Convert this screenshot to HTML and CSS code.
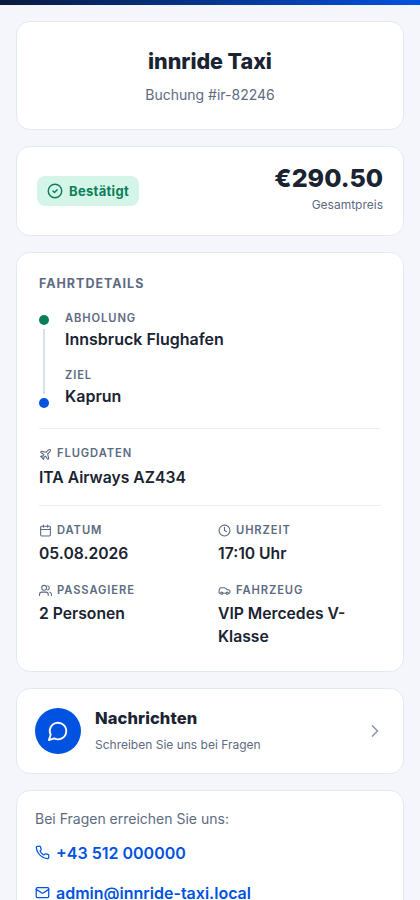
FILE: index.html
```html
<!DOCTYPE html>
<html lang="de">
<head>
<meta charset="utf-8">
<meta name="viewport" content="width=device-width, initial-scale=1">
<title>innride Taxi</title>
<link rel="stylesheet" href="styles.css">
</head>
<body>
<div class="topbar"></div>
<main class="page">
  <header class="card brand">
    <h1>innride Taxi</h1>
    <p>Buchung #ir-82246</p>
  </header>

  <section class="card status">
    <span class="badge">
      <svg class="icon" width="18" height="18" viewBox="0 0 24 24"><circle cx="12" cy="12" r="9"/><path d="m9.300 12 2 2 3.600-3.600"/></svg>
      <span>Bestätigt</span>
    </span>
    <div class="price">
      <strong>€290.50</strong>
      <span>Gesamtpreis</span>
    </div>
  </section>

  <section class="card details">
    <h2>Fahrtdetails</h2>
    <div class="route">
      <div class="track"><i class="dot start"></i><i class="line"></i><i class="dot end"></i></div>
      <div class="stops">
        <div><div class="label">Abholung</div><div class="value">Innsbruck Flughafen</div></div>
        <div><div class="label">Ziel</div><div class="value">Kaprun</div></div>
      </div>
    </div>
    <div class="flight">
      <div class="label"><svg class="icon" width="13" height="13" viewBox="0 0 24 24"><path d="M17.8 19.2 16 11l3.500-3.500C21 6 21.500 4 21 3c-1-.5-3 0-4.500 1.500L13 8 4.800 6.200c-.5-.1-.9.1-1.100.5l-.3.500c-.2.5-.1 1 .3 1.300L9 12l-2 3H4l-1 1 3 2 2 3 1-1v-3l3-2 3.500 5.300c.3.4.8.5 1.300.2l.5-.2c.4-.3.6-.7.5-1.200z"/></svg>Flugdaten</div>
      <div class="value">ITA Airways AZ434</div>
    </div>
    <div class="grid">
      <div>
        <div class="label"><svg class="icon" width="13" height="13" viewBox="0 0 24 24"><path d="M8 2v4M16 2v4M3 10h18"/><rect x="3" y="4" width="18" height="18" rx="2"/></svg>Datum</div>
        <div class="value">05.08.2026</div>
      </div>
      <div>
        <div class="label"><svg class="icon" width="13" height="13" viewBox="0 0 24 24"><circle cx="12" cy="12" r="10"/><path d="M12 6v6l4 2"/></svg>Uhrzeit</div>
        <div class="value">17:10 Uhr</div>
      </div>
      <div>
        <div class="label"><svg class="icon" width="13" height="13" viewBox="0 0 24 24"><path d="M17 21v-2a4 4 0 0 0-4-4H5a4 4 0 0 0-4 4v2"/><circle cx="9.500" cy="7" r="4.500"/><path d="M23 21v-2a4 4 0 0 0-3-3.870M16 3.130a4 4 0 0 1 0 7.750"/></svg>Passagiere</div>
        <div class="value">2 Personen</div>
      </div>
      <div>
        <div class="label"><svg class="icon" width="13" height="13" viewBox="0 0 24 24"><path d="M19 17h2c.6 0 1-.4 1-1v-3c0-.9-.7-1.700-1.500-1.900C18.700 10.600 16 10 16 10s-1.300-1.400-2.200-2.300c-.5-.4-1.100-.7-1.800-.7H5c-.6 0-1.100.4-1.400.9l-1.400 2.900A3.700 3.700 0 0 0 2 12v4c0 .6.4 1 1 1h2"/><circle cx="7" cy="17" r="2"/><path d="M9 17h6"/><circle cx="17" cy="17" r="2"/></svg>Fahrzeug</div>
        <div class="value">VIP Mercedes V-Klasse</div>
      </div>
    </div>
  </section>

  <a class="card messages">
    <span class="bubble"><svg class="icon" width="22" height="22" viewBox="0 0 24 24"><path d="M7.900 20A9 9 0 1 0 4 16.100L2 22Z"/></svg></span>
    <span class="messages-text">
      <strong>Nachrichten</strong>
      <span>Schreiben Sie uns bei Fragen</span>
    </span>
    <svg class="icon chevron" width="20" height="20" viewBox="0 0 24 24"><path d="m9 18 6-6-6-6"/></svg>
  </a>

  <section class="card contact">
    <p>Bei Fragen erreichen Sie uns:</p>
    <a><svg class="icon" width="15" height="15" viewBox="0 0 24 24"><path d="M22 16.920v3a2 2 0 0 1-2.180 2 19.790 19.790 0 0 1-8.630-3.070 19.500 19.500 0 0 1-6-6 19.790 19.790 0 0 1-3.070-8.670A2 2 0 0 1 4.110 2h3a2 2 0 0 1 2 1.720 12.840 12.840 0 0 0 .7 2.810 2 2 0 0 1-.45 2.110L8.090 9.910a16 16 0 0 0 6 6l1.270-1.270a2 2 0 0 1 2.110-.45 12.840 12.840 0 0 0 2.810.7A2 2 0 0 1 22 16.920z"/></svg><span>+43 512 000000</span></a>
    <a><svg class="icon" width="15" height="15" viewBox="0 0 24 24"><rect x="2" y="4" width="20" height="16" rx="2"/><path d="m22 7-8.970 5.700a1.940 1.940 0 0 1-2.060 0L2 7"/></svg><span>admin@innride-taxi.local</span></a>
  </section>
</main>
</body>
</html>
```
FILE: styles.css
```css
* { box-sizing: border-box; }
html, body { height: 900px; overflow: hidden; }
body {
  margin: 0;
  background: #f4f6fb;
  color: #1a2332;
  font-family: Inter, "Liberation Sans", sans-serif;
  font-size: 16px;
}
h1, h2, p { margin: 0; }
.icon {
  flex: none;
  fill: none;
  stroke: currentColor;
  stroke-width: 2;
  stroke-linecap: round;
  stroke-linejoin: round;
}
.topbar { height: 5px; background: linear-gradient(135deg, #0a1a3f 0%, #0052e0 100%); }
.page { display: flex; flex-direction: column; gap: 16px; padding: 16px; }
.card { background: #fff; border: 1px solid #e3e9f2; border-radius: 14px; }

.brand { height: 109px; padding: 24px 20px 0; text-align: center; }
.brand h1 { font-size: 21.5px; line-height: 30px; font-weight: 800; letter-spacing: -0.05px; }
.brand p { margin-top: 8px; font-size: 14px; line-height: 22px; color: #5d6b82; }

.status { display: flex; justify-content: space-between; align-items: center; height: 90px; padding: 0 20px; }
.badge {
  display: flex; align-items: center; gap: 5px;
  height: 30px; padding: 0 10px 0 9px;
  border-radius: 8px;
  background: #d5f5e8; color: #0a7f5a;
  font-size: 13px; font-weight: 700; letter-spacing: 0.3px;
}
.badge .icon { stroke-width: 1.9; }
.price { display: flex; flex-direction: column; align-items: flex-end; padding-bottom: 6px; }
.price strong { font-size: 25px; line-height: 32px; font-weight: 800; }
.price span { margin-top: 2px; font-size: 12px; line-height: 18px; color: #5d6b82; }

.details { height: 420px; padding: 20px 22px 0; }
.details h2 { font-size: 12.5px; line-height: 21px; font-weight: 700; letter-spacing: 1px; color: #5d6b82; text-transform: uppercase; }
.label {
  display: flex; align-items: center; gap: 5px;
  font-size: 11.2px; line-height: 18px; font-weight: 600; letter-spacing: 0.9px;
  color: #5d6b82; text-transform: uppercase;
}
.label .icon { margin-top: 1px; }
.value { font-size: 16px; line-height: 23px; font-weight: 600; }
.route { display: flex; gap: 16px; margin-top: 15px; padding-bottom: 20px; }
.track { display: flex; flex-direction: column; align-items: center; gap: 4px; width: 10px; padding: 6px 0 0; height: 99px; }
.dot { width: 10px; height: 10px; border-radius: 50%; }
.start { background: #0a7f5a; }
.end { background: #0052e0; }
.line { flex: 1; width: 2px; background: #d7e1ed; }
.stops { display: flex; flex-direction: column; gap: 15px; }
.stops .value { margin-top: 1px; }
.flight, .grid { border-top: 1px solid #e9eef5; padding-top: 15px; }
.flight { height: 77px; }
.flight .label .icon { margin-top: 2px; }
.flight .value { margin-top: 4px; font-size: 15.7px; }
.grid { display: grid; grid-template-columns: 1fr 1fr; gap: 16px; }
.grid .value { margin-top: 3px; font-size: 15.7px; }

.messages { display: flex; align-items: center; gap: 14px; height: 86px; padding: 0 18px; }
.bubble { display: flex; align-items: center; justify-content: center; width: 46px; height: 46px; border-radius: 50%; background: #0052e0; color: #fff; }
.messages-text { display: flex; flex-direction: column; flex: 1; gap: 5px; padding-bottom: 2px; }
.messages-text strong { font-size: 16.5px; line-height: 24px; font-weight: 800; letter-spacing: 0.1px; }
.messages-text span { font-size: 12px; line-height: 19px; color: #5d6b82; }
.chevron { color: #8d9aae; }

.contact { height: 150px; padding: 18px; }
.contact p { font-size: 14px; line-height: 20px; color: #5d6b82; }
.contact a { display: flex; align-items: center; gap: 6px; height: 40px; color: #0052e0; font-size: 16px; font-weight: 600; }
.contact p + a { margin-top: 4px; }
.contact a .icon { margin-bottom: 1px; }
```
